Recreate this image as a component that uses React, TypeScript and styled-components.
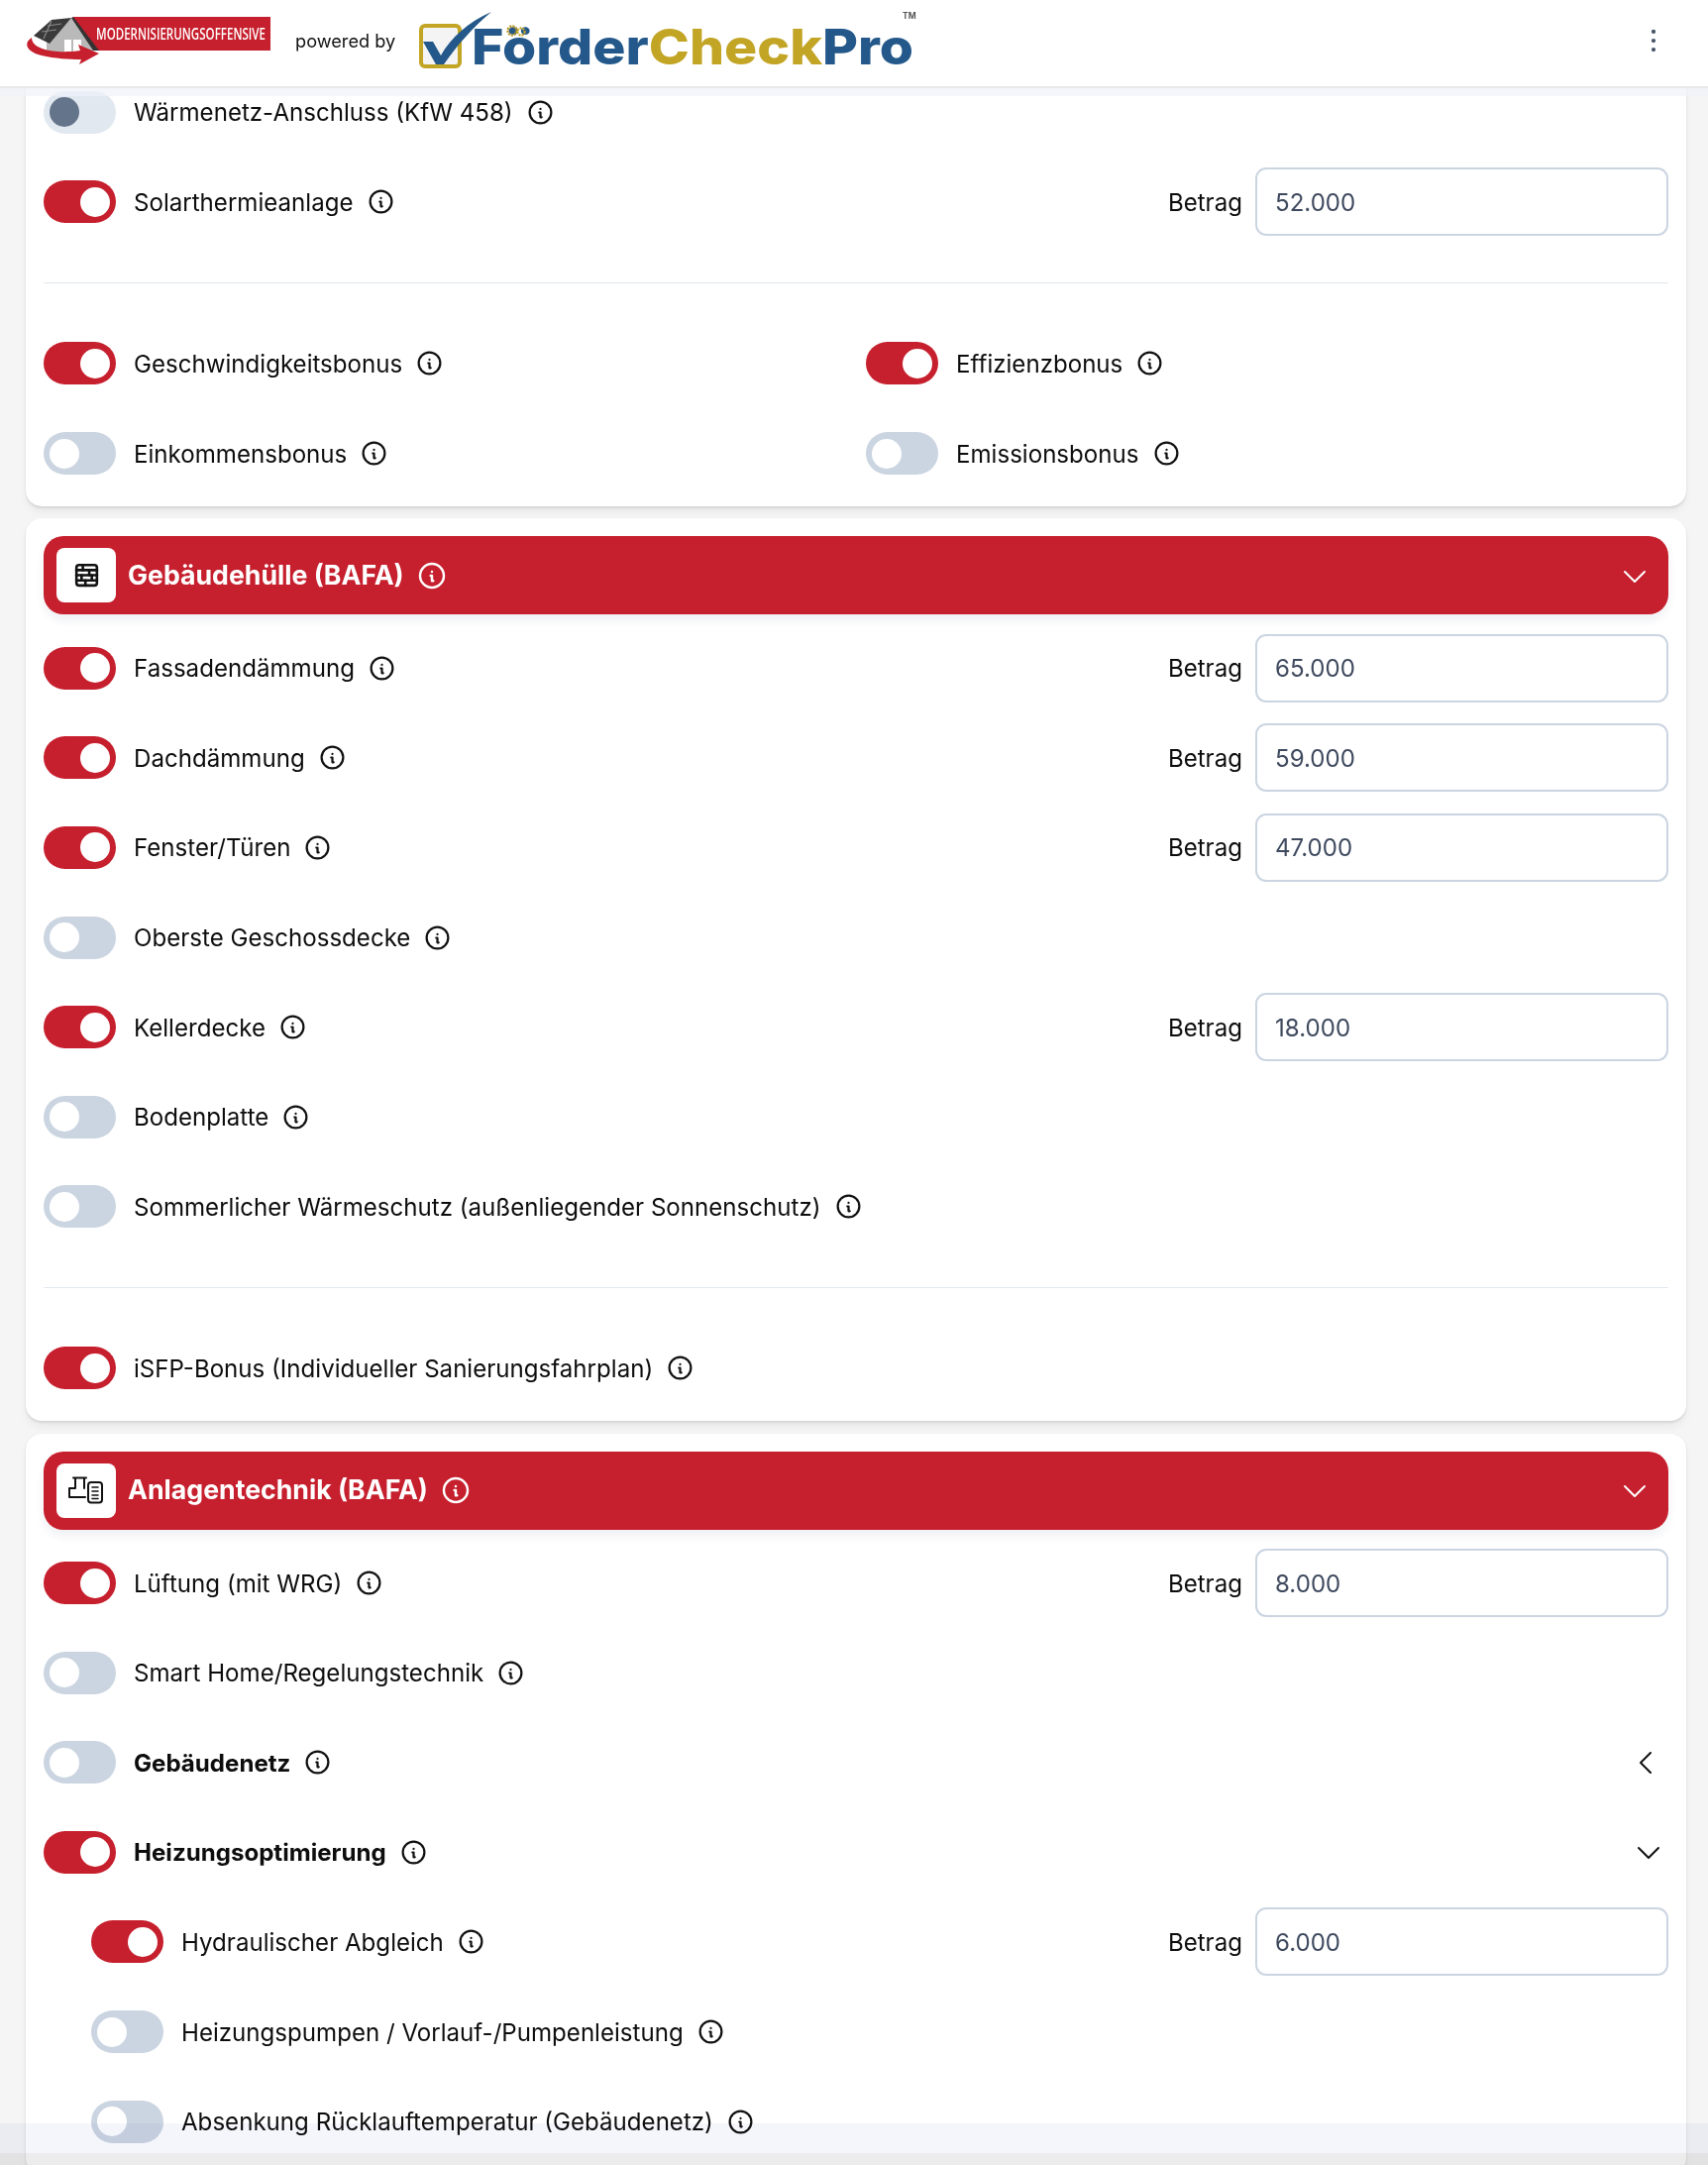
import React from "react";
import styled, { createGlobalStyle } from "styled-components";
import { PiCaretDown, PiCaretLeft, PiDotsThreeVerticalBold } from "react-icons/pi";
import { TbInfoCircle, TbWall } from "react-icons/tb";

const Global = createGlobalStyle`
  html, body { margin: 0; padding: 0; height: 100%; background: #f5f5f5; }
  body { font-family: Inter, "Liberation Sans", sans-serif; color: #111; overflow: hidden; }
  * { box-sizing: border-box; }
`;

const Page = styled.div`
  position: relative;
  height: 2185px;
  overflow: hidden;
`;

const Header = styled.header`
  position: absolute;
  top: 0;
  left: 0;
  right: 0;
  z-index: 5;
  height: 87px;
  padding: 0 38px 0 26px;
  display: flex;
  align-items: center;
  background: #fff;
  box-shadow: 0 2px 0 #e8e8e8, 0 10px 0 rgba(240, 242, 250, 0.7);
`;

const Powered = styled.span`
  margin: 0 20px 5px 24px;
  font-size: 18.2px;
  color: #111;
  white-space: nowrap;
`;

const MenuButton = styled.div`
  margin: 0 0 5px auto;
  display: flex;
  color: #475569;
`;

const Main = styled.main`
  padding: 78px 22px 0 26px;
  display: flex;
  flex-direction: column;
  gap: 12.5px;
`;

const Card = styled.section<{ $clipped?: boolean }>`
  background: #fff;
  padding: ${(p) => (p.$clipped ? "0" : "18px")} 18px 18px;
  border-radius: ${(p) => (p.$clipped ? "0 0 16px 16px" : "16px")};
  box-shadow: 0 2px 2px rgba(0, 0, 0, 0.08), 0 6px 8px rgba(0, 0, 0, 0.05), 0 0 2px rgba(0, 0, 0, 0.05);
`;

const SectionBar = styled.div`
  height: 79px;
  margin-bottom: 18.6px;
  padding: 0 18px 0 13px;
  display: flex;
  align-items: center;
  background: #c61f2d;
  color: #fff;
  border-radius: 20px;
  box-shadow: 0 6px 10px rgba(30, 40, 90, 0.07);
`;

const IconTile = styled.div`
  width: 60px;
  height: 55px;
  margin-right: 12px;
  display: flex;
  align-items: center;
  justify-content: center;
  background: #fff;
  color: #111;
  border-radius: 8px;
`;

const SectionTitle = styled.h2`
  margin: 0 12px 2px 0;
  font-size: 26.7px;
  font-weight: 700;
  line-height: 1;
`;

const BarCaret = styled.div`
  margin-left: auto;
  display: flex;
`;

const List = styled.div`
  display: flex;
  flex-direction: column;
  gap: 20px;
`;

const TwoCols = styled.div`
  display: grid;
  grid-template-columns: 1fr 1fr;
  gap: 20px;
`;

const Row = styled.div<{ $nested?: boolean }>`
  height: 70.6px;
  padding-left: ${(p) => (p.$nested ? "48px" : "0")};
  display: flex;
  align-items: center;
`;

const Track = styled.div<{ $on?: boolean; $dim?: boolean }>`
  width: 73px;
  height: 43px;
  flex: none;
  margin-right: 18px;
  padding: 0 6px;
  display: flex;
  align-items: center;
  justify-content: ${(p) => (p.$on ? "flex-end" : "flex-start")};
  background: ${(p) => (p.$on ? "#c61f2d" : p.$dim ? "#e2e8f0" : "#cbd5e1")};
  border-radius: 22px;
`;

const Thumb = styled.div<{ $dim?: boolean }>`
  width: 30px;
  height: 30px;
  border-radius: 50%;
  background: ${(p) => (p.$dim ? "#64748b" : "#fff")};
`;

const Label = styled.span<{ $bold?: boolean }>`
  margin-right: 13px;
  padding-top: 1px;
  font-size: 24.1px;
  font-weight: ${(p) => (p.$bold ? 700 : 400)};
  color: #0d0d0d;
  white-space: nowrap;
`;

const InfoMark = styled.span`
  display: flex;
  color: inherit;
`;

const Amount = styled.div`
  margin-left: auto;
  display: flex;
  align-items: center;
`;

const AmountLabel = styled.span`
  margin-right: 13px;
  padding-top: 1px;
  font-size: 24.1px;
  color: #0d0d0d;
`;

const AmountInput = styled.input`
  width: 417px;
  height: 69px;
  padding: 1px 18px 0;
  border: 2px solid #cbd5e1;
  border-radius: 11px;
  background: #fff;
  outline: none;
  font-family: inherit;
  font-size: 24.1px;
  color: #3f4a5f;
`;

const RowCaret = styled.div<{ $shift?: number }>`
  margin-left: auto;
  margin-right: ${(p) => p.$shift ?? 4}px;
  display: flex;
`;

const Divider = styled.hr`
  margin: 46px 0 45.5px;
  height: 1px;
  border: 0;
  background: #e2e8f0;
`;

const BottomFade = styled.div`
  position: absolute;
  left: 0;
  right: 0;
  bottom: 0;
  height: 42px;
  mix-blend-mode: multiply;
  background: linear-gradient(#f5f6fb 0, #f5f6fb 30px, #ececec 30px);
`;

function Info({ size = 29 }: { size?: number }) {
  return (
    <InfoMark>
      <TbInfoCircle size={size} strokeWidth={1.85} />
    </InfoMark>
  );
}

type ItemProps = {
  label: string;
  on?: boolean;
  dim?: boolean;
  bold?: boolean;
  nested?: boolean;
  amount?: string;
  caret?: "left" | "down";
};

function Item({ label, on, dim, bold, nested, amount, caret }: ItemProps) {
  return (
    <Row $nested={nested}>
      <Track $on={on} $dim={dim}>
        <Thumb $dim={dim} />
      </Track>
      <Label $bold={bold}>{label}</Label>
      <Info />
      {amount && (
        <Amount>
          <AmountLabel>Betrag</AmountLabel>
          <AmountInput defaultValue={amount} />
        </Amount>
      )}
      {caret === "left" && (
        <RowCaret $shift={6}>
          <PiCaretLeft size={32} />
        </RowCaret>
      )}
      {caret === "down" && (
        <RowCaret>
          <PiCaretDown size={32} />
        </RowCaret>
      )}
    </Row>
  );
}

function Bar({ title, icon }: { title: string; icon: React.ReactNode }) {
  return (
    <SectionBar>
      <IconTile>{icon}</IconTile>
      <SectionTitle>{title}</SectionTitle>
      <Info size={32} />
      <BarCaret>
        <PiCaretDown size={32} />
      </BarCaret>
    </SectionBar>
  );
}

function OffensiveLogo() {
  return (
    <svg width="248" height="59" viewBox="26 14 248 59" aria-label="Modernisierungsoffensive">
      <rect x="74" y="17" width="199" height="34" fill="#c61f2d" />
      <path d="M72 18 L98 51 L92 51 L92 54 L47 52 L47 42 Z" fill="#b9b9b9" />
      <path d="M72 18 L74 17 L100 51 L94 51 Z" fill="#333" />
      <path d="M52 20 L72 18 L50 44 L34 36 Z" fill="#3a3a3a" />
      <path d="M48 26 L62 24 M42 32 L57 30 M52 21 L44 39" stroke="#8b8b8b" strokeWidth="1.2" fill="none" />
      <rect x="65" y="40" width="17" height="14" fill="#fff" />
      <rect x="72" y="40" width="2" height="14" fill="#b9b9b9" />
      <path
        d="M32 38 C23 44 27 52 42 56 C55 59 70 60 82 60 L80 65 L100 54 L79 45 L81 51 C62 54 32 52 32 38 Z"
        fill="#c61f2d"
      />
      <text
        transform="translate(97 40) scale(0.66 1)"
        fontFamily="'Open Sans', 'Liberation Sans', sans-serif"
        fontSize="15.5"
        fontWeight="600"
        fill="#fff"
        textLength="259"
        lengthAdjust="spacingAndGlyphs"
      >
        MODERNISIERUNGSOFFENSIVE
      </text>
    </svg>
  );
}

function CheckLogo() {
  return (
    <svg width="510" height="71" viewBox="420 8 510 71" aria-label="FörderCheckPro">
      <rect x="426" y="26" width="39" height="41" rx="4" fill="#f4f4f4" stroke="#c3a526" strokeWidth="4" />
      <path d="M428 42 L438 42 L446 56 C456 38 474 22 497 12 C478 28 462 46 449 65 L441 65 Z" fill="#24588a" />
      <text
        x="477"
        y="65"
        fontFamily="Inter, 'Open Sans', sans-serif"
        fontSize="50"
        fontWeight="800"
        textLength="446"
        lengthAdjust="spacingAndGlyphs"
      >
        <tspan fill="#24588a">Förder</tspan>
        <tspan fill="#c3a526">Check</tspan>
        <tspan fill="#24588a">Pro</tspan>
      </text>
      <circle cx="518" cy="31" r="4.5" fill="none" stroke="#b79a2a" strokeWidth="2.4" strokeDasharray="2 1" />
      <circle cx="527" cy="32" r="3.6" fill="none" stroke="#c3a526" strokeWidth="2.2" strokeDasharray="2 1" />
      <text x="912" y="19" fontFamily="Inter, sans-serif" fontSize="8.5" fontWeight="700" fill="#555">
        TM
      </text>
    </svg>
  );
}

function PlantIcon() {
  return (
    <svg width="36" height="28" viewBox="0 0 36 28" fill="none" stroke="#111" strokeWidth="2" strokeLinecap="round" strokeLinejoin="round">
      <path d="M1 21 V12 H7 V1.5 M5 1.5 H18 M16 1.5 V12 M1 21 H17" />
      <rect x="20" y="6" width="14" height="20.5" rx="3" />
      <path d="M24 11 H30 M24 15 H30 M24 19 H30 M24 22.5 H30" strokeWidth="1.6" />
    </svg>
  );
}

export default function App() {
  return (
    <Page>
      <Global />
      <Header>
        <OffensiveLogo />
        <Powered>powered by</Powered>
        <CheckLogo />
        <MenuButton>
          <PiDotsThreeVerticalBold size={34} />
        </MenuButton>
      </Header>
      <Main>
        <Card $clipped>
          <List>
            <Item label="Wärmenetz-Anschluss (KfW 458)" dim />
            <Item label="Solarthermieanlage" on amount="52.000" />
          </List>
          <Divider />
          <List>
            <TwoCols>
              <Item label="Geschwindigkeitsbonus" on />
              <Item label="Effizienzbonus" on />
            </TwoCols>
            <TwoCols>
              <Item label="Einkommensbonus" />
              <Item label="Emissionsbonus" />
            </TwoCols>
          </List>
        </Card>
        <Card>
          <Bar title="Gebäudehülle (BAFA)" icon={<TbWall size={31} />} />
          <List>
            <Item label="Fassadendämmung" on amount="65.000" />
            <Item label="Dachdämmung" on amount="59.000" />
            <Item label="Fenster/Türen" on amount="47.000" />
            <Item label="Oberste Geschossdecke" />
            <Item label="Kellerdecke" on amount="18.000" />
            <Item label="Bodenplatte" />
            <Item label="Sommerlicher Wärmeschutz (außenliegender Sonnenschutz)" />
          </List>
          <Divider />
          <List>
            <Item label="iSFP-Bonus (Individueller Sanierungsfahrplan)" on />
          </List>
        </Card>
        <Card>
          <Bar title="Anlagentechnik (BAFA)" icon={<PlantIcon />} />
          <List>
            <Item label="Lüftung (mit WRG)" on amount="8.000" />
            <Item label="Smart Home/Regelungstechnik" />
            <Item label="Gebäudenetz" bold caret="left" />
            <Item label="Heizungsoptimierung" on bold caret="down" />
            <Item label="Hydraulischer Abgleich" on nested amount="6.000" />
            <Item label="Heizungspumpen / Vorlauf-/Pumpenleistung" nested />
            <Item label="Absenkung Rücklauftemperatur (Gebäudenetz)" nested />
          </List>
        </Card>
      </Main>
      <BottomFade />
    </Page>
  );
}
